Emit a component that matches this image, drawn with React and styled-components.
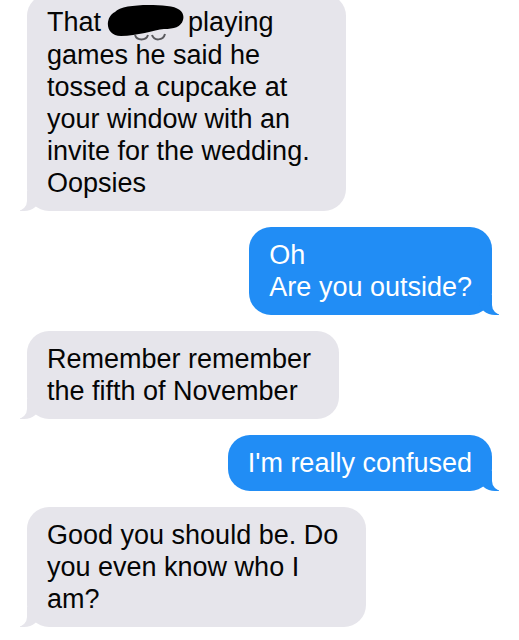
import React from "react";
import styled, { createGlobalStyle, css } from "styled-components";

const Global = createGlobalStyle`
  html, body { margin: 0; padding: 0; background: #ffffff; }
  body { width: 519px; height: 640px; overflow: hidden; }
`;

const Thread = styled.div`
  display: flex;
  flex-direction: column;
  gap: 16px;
  padding: 0 27px;
  margin-top: -6px;
  font-family: "Liberation Sans", Arial, Helvetica, sans-serif;
  font-size: 27px;
  line-height: 32px;
`;

const Bubble = styled.div`
  position: relative;
  width: fit-content;
  border-radius: 22px;
  box-sizing: border-box;

  &::before, &::after {
    content: "";
    position: absolute;
    bottom: 0;
    height: 20px;
  }

  ${(p) =>
    p.$from === "me"
      ? css`
          align-self: flex-end;
          background: #218df5;
          color: #ffffff;
          padding: 12px 20px;
          &::before {
            right: -7px;
            width: 20px;
            background: #218df5;
            border-bottom-left-radius: 16px 14px;
          }
          &::after {
            right: -26px;
            width: 26px;
            background: #ffffff;
            border-bottom-left-radius: 10px;
          }
        `
      : css`
          align-self: flex-start;
          background: #e6e5eb;
          color: #050505;
          padding: 12px ${p.$wide ? "36px" : "28px"} 12px 20px;
          &::before {
            left: -7px;
            width: 20px;
            background: #e6e5eb;
            border-bottom-right-radius: 16px 14px;
          }
          &::after {
            left: -26px;
            width: 26px;
            background: #ffffff;
            border-bottom-right-radius: 10px;
          }
        `}
`;

const Redaction = styled.svg`
  display: inline-block;
  width: 78px;
  height: 38px;
  vertical-align: -8px;
  margin: -10px -4px -4px -2px;
`;

function Blob() {
  return (
    <Redaction viewBox="0 0 78 38" aria-hidden="true">
      <path
        d="M28 30 C30 36 39 36 41 30 M45 30 C47 36 56 36 58 29"
        fill="none"
        stroke="#5a5a5e"
        strokeWidth="2"
      />
      <path
        d="M8 7 C14 0 40 -1 60 1 C73 2 78 8 76 15 C74 22 67 24 57 24 C47 25 30 31 14 31 C4 31 0 24 1 17 C2 12 4 9 8 7 Z"
        fill="#000000"
      />
    </Redaction>
  );
}

export default function App() {
  return (
    <>
      <Global />
      <Thread>
        <Bubble $from="them" $wide>
          That <Blob /> playing
          <br />
          games he said he
          <br />
          tossed a cupcake at
          <br />
          your window with an
          <br />
          invite for the wedding.
          <br />
          Oopsies
        </Bubble>
        <Bubble $from="me">
          Oh
          <br />
          Are you outside?
        </Bubble>
        <Bubble $from="them">
          Remember remember
          <br />
          the fifth of November
        </Bubble>
        <Bubble $from="me">I'm really confused</Bubble>
        <Bubble $from="them">
          Good you should be. Do
          <br />
          you even know who I
          <br />
          am?
        </Bubble>
      </Thread>
    </>
  );
}
